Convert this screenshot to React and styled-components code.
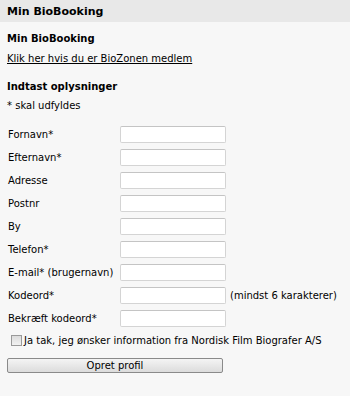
import React from 'react'
import styled, { createGlobalStyle } from 'styled-components'

const GlobalStyle = createGlobalStyle`
  html, body {
    margin: 0;
    padding: 0;
    background: #f7f7f7;
  }
  body {
    font-family: "DejaVu Sans", Verdana, sans-serif;
    font-size: 10px;
    color: #000;
  }
`

const Container = styled.div`
  width: 350px;
  height: 396px;
  background: #f7f7f7;
`

const Header = styled.div`
  height: 22px;
  background: #e8e8e8;
  display: flex;
  align-items: center;
  padding: 0 7px;
  font-weight: bold;
  font-size: 11px;
`

const Body = styled.div`
  padding: 10px 7px 0 7px;
`

const Heading = styled.div`
  font-weight: bold;
  font-size: 10px;
  line-height: 13px;
  margin-bottom: ${p => p.$gap || 0}px;
`

const LinkText = styled.a`
  display: block;
  color: #000;
  text-decoration: underline;
  line-height: 13px;
  margin-bottom: 15px;
`

const Note = styled.div`
  line-height: 13px;
  margin-top: 1px;
  margin-bottom: 14px;
`

const Form = styled.div`
  display: flex;
  flex-direction: column;
  gap: 6px;
`

const Row = styled.div`
  display: flex;
  align-items: center;
  height: 17px;
`

const Label = styled.label`
  width: 112px;
  padding-left: 1px;
`

const Input = styled.input`
  box-sizing: border-box;
  width: 106px;
  height: 17px;
  margin: 0;
  border: 1px solid #d4d4d4;
  border-top-color: #c4c4c4;
  border-radius: 2px;
  background: #fff;
`

const Hint = styled.span`
  margin-left: 4px;
`

const CheckRow = styled.div`
  display: flex;
  align-items: center;
  margin-top: 8px;
  padding-left: 4px;
`

const Box = styled.span`
  box-sizing: border-box;
  width: 11px;
  height: 11px;
  border: 1px solid #9a9a9a;
  background: linear-gradient(#dcdcdc, #f2f2f2);
  margin-right: 2px;
`

const Button = styled.button`
  box-sizing: border-box;
  display: block;
  width: 216px;
  height: 15px;
  margin-top: 12px;
  padding: 0;
  border: 1px solid #8a8a8a;
  border-radius: 2px;
  background: linear-gradient(#f4f4f4, #dcdcdc);
  font-family: "DejaVu Sans", Verdana, sans-serif;
  font-size: 10px;
  color: #000;
  line-height: 13px;
`

const fields = [
  ['Fornavn*'],
  ['Efternavn*'],
  ['Adresse'],
  ['Postnr'],
  ['By'],
  ['Telefon*'],
  ['E-mail* (brugernavn)'],
  ['Kodeord*', '(mindst 6 karakterer)'],
  ['Bekræft kodeord*'],
]

const App = () => {
  return (
    <Container>
      <GlobalStyle />
      <Header>Min BioBooking</Header>
      <Body>
        <Heading $gap={7}>Min BioBooking</Heading>
        <LinkText href="#">Klik her hvis du er BioZonen medlem</LinkText>
        <Heading $gap={6}>Indtast oplysninger</Heading>
        <Note>* skal udfyldes</Note>
        <Form>
          {fields.map(([label, hint]) => (
            <Row key={label}>
              <Label>{label}</Label>
              <Input type="text" />
              {hint && <Hint>{hint}</Hint>}
            </Row>
          ))}
        </Form>
        <CheckRow>
          <Box />
          <span>Ja tak, jeg ønsker information fra Nordisk Film Biografer A/S</span>
        </CheckRow>
        <Button>Opret profil</Button>
      </Body>
    </Container>
  )
}

export default App
